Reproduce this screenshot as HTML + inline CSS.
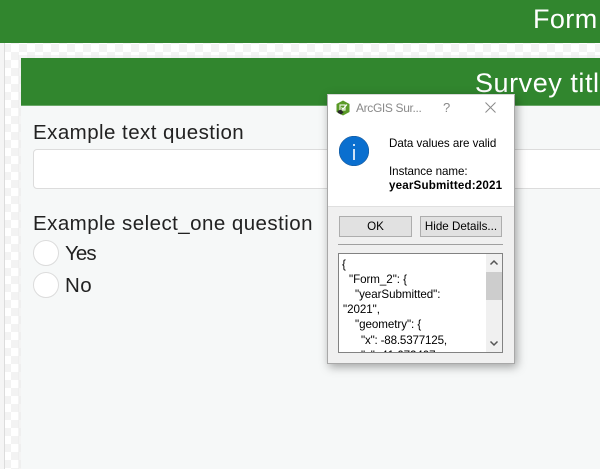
<!DOCTYPE html>
<html><head><meta charset="utf-8">
<style>
html,body{margin:0;padding:0;}
body{width:600px;height:469px;overflow:hidden;position:relative;background:#fff;font-family:"Liberation Sans",sans-serif;}
div,svg{position:absolute;box-sizing:border-box;}
.t{white-space:nowrap;line-height:1;}
.lb{color:#222;font-size:20.5px;letter-spacing:.45px;}
.d{color:#000;font-size:11.6px;letter-spacing:-.05px;white-space:nowrap;line-height:1;}
.btn{background:#e1e1e1;border:1px solid #adadad;color:#000;font-size:11.6px;text-align:center;line-height:19px;white-space:nowrap;}
</style></head>
<body>
<div style="left:0;top:43px;width:600px;height:426px;background-color:#fff;background-image:conic-gradient(#f3f3f3 25%,#fff 0 50%,#f3f3f3 0 75%,#fff 0);background-size:16px 16px;background-position:11px 1px;"></div>
<div style="left:0;top:43px;width:4px;height:426px;background:#f5f5f5;"></div>
<div style="left:4px;top:43px;width:1px;height:426px;background:#dcdcdc;"></div>
<div style="left:0;top:0;width:600px;height:43px;background:#31862e;"></div>
<div class="t" style="left:533px;top:6px;color:#fff;font-size:27px;letter-spacing:.4px;">Form</div>
<div style="left:18px;top:55px;width:582px;height:414px;background:#ececec;opacity:.6;"></div>
<div style="left:21px;top:58px;width:579px;height:411px;background:#f6f8f8;"></div>
<div style="left:21px;top:58px;width:579px;height:48px;background:#31862e;border-bottom:1px solid #6aa868;"></div>
<div class="t" style="left:475px;top:70px;color:#fff;font-size:27px;letter-spacing:.55px;">Survey title</div>

<div class="t lb" style="left:33px;top:123px;">Example text question</div>
<div style="left:33px;top:149px;width:590px;height:40px;background:#fff;border:1px solid #dcdcdc;border-radius:4px;"></div>
<div class="t lb" style="left:33px;top:214px;">Example select_one question</div>
<div style="left:33px;top:240px;width:26px;height:26px;border-radius:50%;background:#fff;border:1px solid #dcdcdc;"></div>
<div class="t lb" style="left:65px;top:244px;letter-spacing:-.9px;">Yes</div>
<div style="left:33px;top:272px;width:26px;height:26px;border-radius:50%;background:#fff;border:1px solid #dcdcdc;"></div>
<div class="t lb" style="left:65px;top:276px;">No</div>

<!-- dialog -->
<div style="left:327px;top:94px;width:188px;height:270px;background:#f0f0f0;border:1px solid #a8a8a8;border-top-color:#d8d8d8;box-shadow:2px 3px 9px rgba(0,0,0,.35);"></div>
<div style="left:328px;top:95px;width:186px;height:112px;background:#fff;border-bottom:1px solid #dfdfdf;"></div>
<svg style="left:335px;top:100px;" width="16" height="16" viewBox="0 0 16 16">
<path d="M8 0.5L14.5 4V12L8 15.5L1.5 12V4Z" fill="#5a9a28"/>
<path d="M5 5H10V10H5Z" fill="none" stroke="#e8f2dc" stroke-width="1.2"/>
<path d="M6.5 7.5L8 9L12 4.5" fill="none" stroke="#fff" stroke-width="1.2"/>
<path d="M2.5 11L6 9.5L8.5 12.5L6 14.5L3 13Z" fill="#2a2a2a"/>
</svg>
<div class="t" style="left:356px;top:102px;color:#8a8a8a;font-size:12px;letter-spacing:-.35px;">ArcGIS Sur...</div>
<div class="t" style="left:443px;top:101px;color:#8a8a8a;font-size:13px;">?</div>
<svg style="left:485px;top:102px;" width="11" height="11" viewBox="0 0 11 11"><path d="M.5 .5L10.5 10.5M10.5 .5L.5 10.5" stroke="#8a8a8a" stroke-width="1" fill="none"/></svg>

<svg style="left:339px;top:136px;" width="30" height="30" viewBox="0 0 30 30">
<circle cx="15" cy="15" r="14.8" fill="#0a6fcf"/>
<circle cx="15" cy="15" r="14.8" fill="none" stroke="#1a5a9a" stroke-width=".6"/>
<rect x="14.2" y="13" width="1.6" height="11" fill="#fff"/>
<rect x="14.2" y="8" width="1.6" height="2" fill="#fff"/>
</svg>
<div class="d" style="left:389px;top:138px;">Data values are valid</div>
<div class="d" style="left:389px;top:166px;">Instance name:</div>
<div class="d" style="left:389px;top:180px;font-weight:bold;letter-spacing:.17px;">yearSubmitted:2021</div>

<div class="btn" style="left:339px;top:216px;width:73px;height:21px;">OK</div>
<div class="btn" style="left:420px;top:216px;width:82px;height:21px;">Hide Details...</div>
<div style="left:338px;top:244px;width:165px;height:1px;background:#a0a0a0;"></div>

<div style="left:338px;top:253px;width:165px;height:100px;background:#fff;border:1px solid #828282;overflow:hidden;">
<div class="d" style="left:3px;top:5px;">{</div>
<div class="d" style="left:10px;top:20px;">"Form_2": {</div>
<div class="d" style="left:16px;top:35px;">"yearSubmitted":</div>
<div class="d" style="left:4px;top:50px;">"2021",</div>
<div class="d" style="left:16px;top:65px;">"geometry": {</div>
<div class="d" style="left:22px;top:81px;letter-spacing:-.17px;">"x": -88.5377125,</div>
<div class="d" style="left:22px;top:96px;">"y": 41.672407,</div>
<div style="left:147px;top:0;width:16px;height:98px;background:#f0f0f0;"></div>
<div style="left:147px;top:18px;width:16px;height:28px;background:#cdcdcd;"></div>
<svg style="left:150px;top:5px;" width="10" height="88" viewBox="0 0 10 88"><path d="M1.5 5.5L5 2L8.500 5.500M1.500 82.500L5 86L8.500 82.500" fill="none" stroke="#555" stroke-width="1.500"/></svg>
</div>
</body></html>
